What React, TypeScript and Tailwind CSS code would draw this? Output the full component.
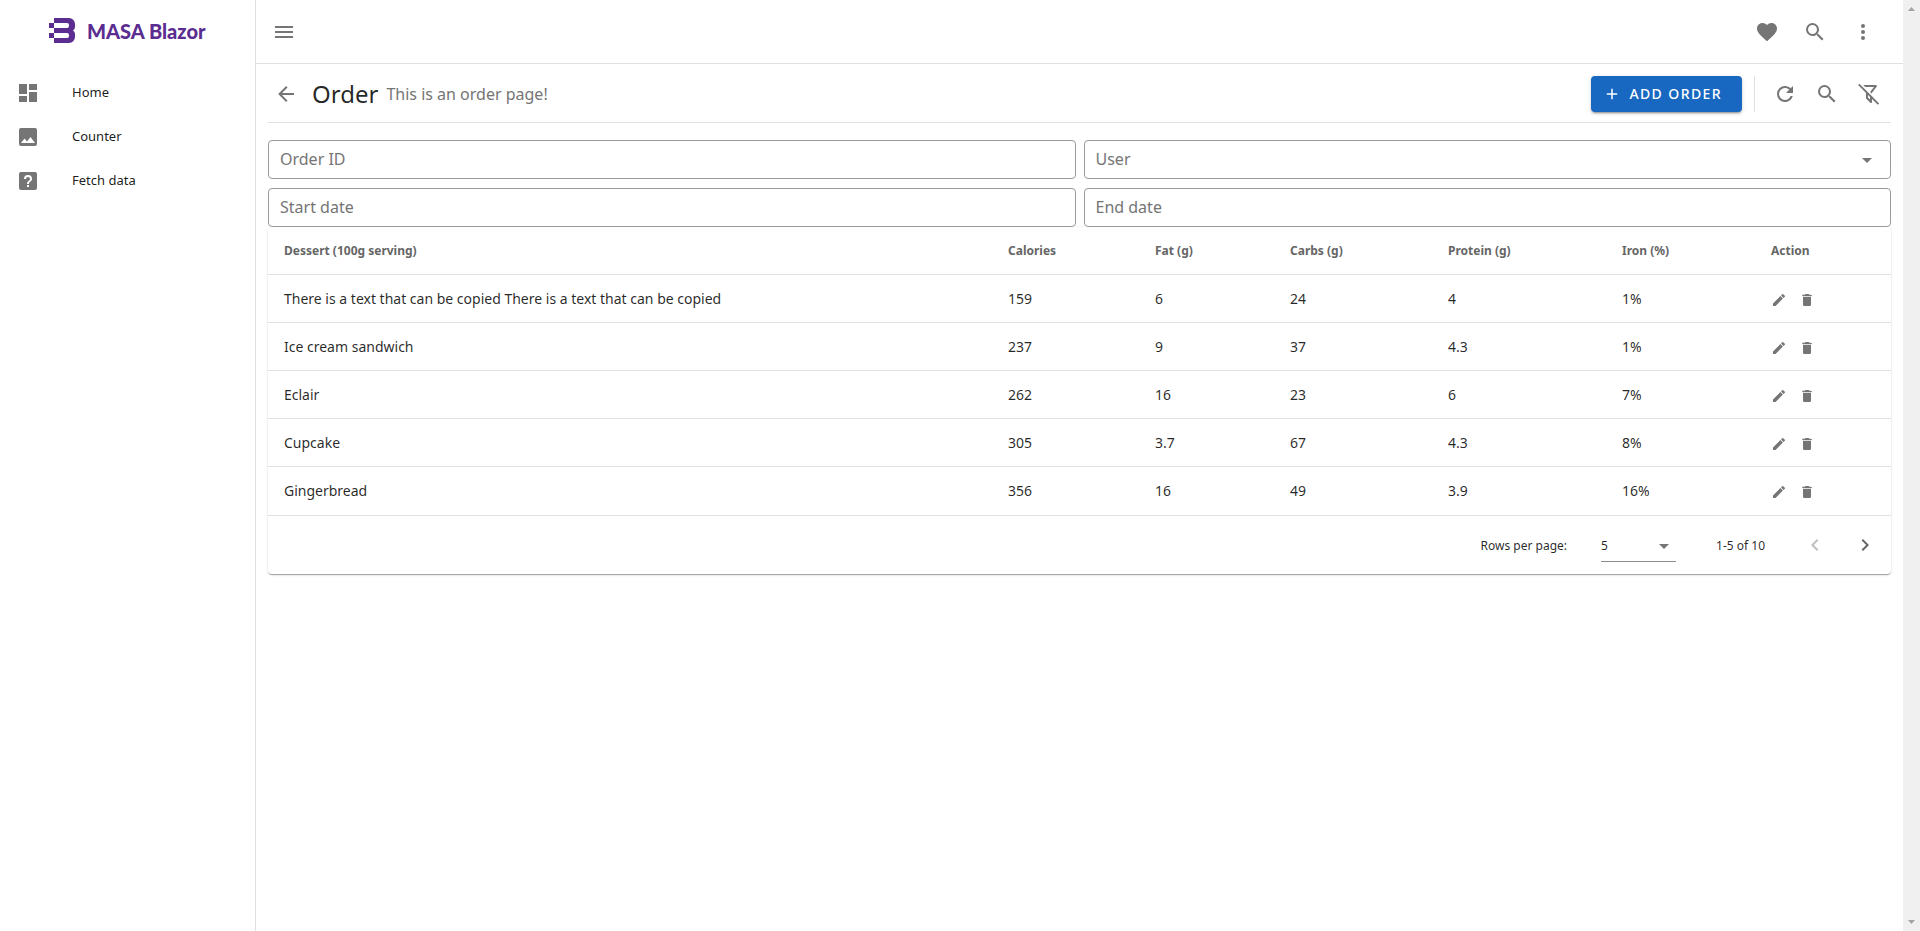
import type { ReactNode } from "react";

const icons = {
  dashboard: "M13,3V9H21V3M13,21H21V11H13M3,21H11V15H3M3,13H11V3H3V13Z",
  image:
    "M8.5,13.5L11,16.5L14.5,12L19,18H5M21,19V5C21,3.89 20.1,3 19,3H5A2,2 0 0,0 3,5V19A2,2 0 0,0 5,21H19A2,2 0 0,0 21,19Z",
  help: "M11,18H13V16H11V18M12,6A4,4 0 0,0 8,10H10A2,2 0 0,1 12,8A2,2 0 0,1 14,10C14,12 11,11.75 11,15H13C13,12.75 16,12.5 16,10A4,4 0 0,0 12,6M5,3H19A2,2 0 0,1 21,5V19A2,2 0 0,1 19,21H5A2,2 0 0,1 3,19V5A2,2 0 0,1 5,3Z",
  menu: "M3,6H21V8H3V6M3,11H21V13H3V11M3,16H21V18H3V16Z",
  heart:
    "M12,21.35L10.55,20.03C5.4,15.36 2,12.27 2,8.5C2,5.41 4.42,3 7.5,3C9.24,3 10.91,3.81 12,5.08C13.09,3.81 14.76,3 16.5,3C19.58,3 22,5.41 22,8.5C22,12.27 18.6,15.36 13.45,20.03L12,21.35Z",
  search:
    "M9.5,3A6.5,6.5 0 0,1 16,9.5C16,11.11 15.41,12.59 14.44,13.73L14.71,14H15.5L20.5,19L19,20.5L14,15.5V14.71L13.73,14.44C12.59,15.41 11.11,16 9.5,16A6.5,6.5 0 0,1 3,9.5A6.5,6.5 0 0,1 9.5,3M9.5,5C7,5 5,7 5,9.5C5,12 7,14 9.5,14C12,14 14,12 14,9.5C14,7 12,5 9.5,5Z",
  dots: "M12,16A2,2 0 0,1 14,18A2,2 0 0,1 12,20A2,2 0 0,1 10,18A2,2 0 0,1 12,16M12,10A2,2 0 0,1 14,12A2,2 0 0,1 12,14A2,2 0 0,1 10,12A2,2 0 0,1 12,10M12,4A2,2 0 0,1 14,6A2,2 0 0,1 12,8A2,2 0 0,1 10,6A2,2 0 0,1 12,4Z",
  back: "M20,11V13H8L13.5,18.5L12.08,19.92L4.16,12L12.08,4.08L13.5,5.5L8,11H20Z",
  plus: "M19,13H13V19H11V13H5V11H11V5H13V11H19V13Z",
  refresh:
    "M17.65,6.35C16.2,4.9 14.21,4 12,4A8,8 0 0,0 4,12A8,8 0 0,0 12,20C15.73,20 18.84,17.45 19.73,14H17.65C16.83,16.33 14.61,18 12,18A6,6 0 0,1 6,12A6,6 0 0,1 12,6C13.66,6 15.14,6.69 16.22,7.78L13,11H20V4L17.65,6.35Z",
  filterOff:
    "M2.39 1.73L1.11 3L9 10.89V15.88C8.96 16.18 9.06 16.5 9.29 16.71L13.3 20.72C13.69 21.11 14.32 21.11 14.71 20.72C14.94 20.5 15.04 20.18 15 19.88V16.89L20.84 22.73L22.11 21.46L15 14.35L13 12.35L11 10.34L4.15 3.5L2.39 1.73M6.21 3L8.2 5H16.96L13.11 9.91L15 11.8V10.75L19.79 4.62C20.13 4.19 20.05 3.56 19.62 3.22C19.43 3.08 19.22 3 19 3H6.21M11 12.89L13 14.89V17.58L11 15.58V12.89Z",
  caret: "M7,10L12,15L17,10H7Z",
  pencil:
    "M20.71,7.04C21.1,6.65 21.1,6 20.71,5.63L18.37,3.29C18,2.9 17.35,2.9 16.96,3.29L15.12,5.12L18.87,8.87M3,17.25V21H6.75L17.81,9.93L14.06,6.18L3,17.25Z",
  trash:
    "M19,4H15.5L14.5,3H9.5L8.5,4H5V6H19M6,19A2,2 0 0,0 8,21H16A2,2 0 0,0 18,19V7H6V19Z",
  left: "M15.41,16.58L10.83,12L15.41,7.41L14,6L8,12L14,18L15.41,16.58Z",
  right: "M8.59,16.58L13.17,12L8.59,7.41L10,6L16,12L10,18L8.59,16.58Z",
};

type IconName = keyof typeof icons;

const Icon = ({ name, className = "size-6" }: { name: IconName; className?: string }) => (
  <svg viewBox="0 0 24 24" fill="currentColor" className={`shrink-0 ${className}`} aria-hidden="true">
    <path d={icons[name]} />
  </svg>
);

const IconButton = ({
  name,
  label,
  size = "size-12",
}: {
  name: IconName;
  label: string;
  size?: string;
}) => (
  <button
    type="button"
    aria-label={label}
    className={`flex items-center justify-center rounded-full text-[#757575] hover:bg-black/5 ${size}`}
  >
    <Icon name={name} />
  </button>
);

const navItems: { icon: IconName; label: string }[] = [
  { icon: "dashboard", label: "Home" },
  { icon: "image", label: "Counter" },
  { icon: "help", label: "Fetch data" },
];

const headers = [
  "Dessert (100g serving)",
  "Calories",
  "Fat (g)",
  "Carbs (g)",
  "Protein (g)",
  "Iron (%)",
  "Action",
];

const rows = [
  ["There is a text that can be copied There is a text that can be copied", "159", "6", "24", "4", "1%"],
  ["Ice cream sandwich", "237", "9", "37", "4.3", "1%"],
  ["Eclair", "262", "16", "23", "6", "7%"],
  ["Cupcake", "305", "3.7", "67", "4.3", "8%"],
  ["Gingerbread", "356", "16", "49", "3.9", "16%"],
];

const fieldClass =
  "block h-[39px] w-full rounded border border-[#9a9a9a] bg-white px-[11px] pb-0.5 text-base text-[#666] placeholder:text-[#757575] outline-none focus:border-[#1867c0]";

const SelectWrap = ({ children, caret }: { children: ReactNode; caret: string }) => (
  <div className="relative">
    {children}
    <Icon name="caret" className={`pointer-events-none absolute size-6 text-[#757575] ${caret}`} />
  </div>
);

const Sidebar = () => (
  <aside className="w-64 shrink-0 border-r border-[#e0e0e0]">
    <a href="#" className="flex h-[61px] items-center gap-3 pl-[49px] text-[#5b2d90]">
      <svg viewBox="0 0 26 25" className="h-[25px] w-[26px]" fill="currentColor" aria-hidden="true">
        <path d="M0 5h5v5H0zM0 15h5v5H0z" />
        <path d="M5 0h15a6 6 0 0 1 6 6v3a4 4 0 0 1-2 3.5 4 4 0 0 1 2 3.5v3a6 6 0 0 1-6 6H5v-5h13a2 2 0 0 0 2-2v-1a2 2 0 0 0-2-2H5v-5h13a2 2 0 0 0 2-2V7a2 2 0 0 0-2-2H5z" />
      </svg>
      <span className="font-[Lato,sans-serif] text-xl leading-none font-black whitespace-nowrap">
        MASA Blazor
      </span>
    </a>
    <nav className="mt-[10px]">
      {navItems.map((item) => (
        <a
          key={item.label}
          href="#"
          className="flex h-11 items-center gap-8 px-4 text-[13px] text-black/90 hover:bg-black/5"
        >
          <Icon name={item.icon} className="size-6 text-[#757575]" />
          <span>{item.label}</span>
        </a>
      ))}
    </nav>
  </aside>
);

const TopBar = () => (
  <header className="flex h-16 items-center justify-between border-b border-[#e0e0e0] pr-4 pl-1">
    <IconButton name="menu" label="Toggle menu" />
    <div className="flex">
      <IconButton name="heart" label="Favorites" />
      <IconButton name="search" label="Search" />
      <IconButton name="dots" label="More" />
    </div>
  </header>
);

const PageTitle = () => (
  <div className="flex h-[59px] items-center justify-between border-b border-[#e0e0e0] pt-0.5">
    <div className="flex items-center">
      <IconButton name="back" label="Back" size="size-9" />
      <h1 className="ml-2 text-2xl text-black/85">Order</h1>
      <span className="ml-2 text-base text-[#757575]">This is an order page!</span>
    </div>
    <div className="flex items-center pr-1">
      <button
        type="button"
        className="flex h-9 items-center gap-2 rounded bg-[#1867c0] pr-5 pl-3 text-sm font-medium tracking-widest text-white uppercase shadow-[0_3px_1px_-2px_rgba(0,0,0,.2),0_2px_2px_0_rgba(0,0,0,.14),0_1px_5px_0_rgba(0,0,0,.12)]"
      >
        <Icon name="plus" className="size-[18px]" />
        Add order
      </button>
      <div className="mx-3 h-9 w-px bg-[#e0e0e0]" />
      <IconButton name="refresh" label="Refresh" size="size-9" />
      <IconButton name="search" label="Search orders" />
      <IconButton name="filterOff" label="Clear filters" size="size-9" />
    </div>
  </div>
);

const Filters = () => (
  <form className="mt-[17px] grid grid-cols-2 gap-x-2 gap-y-[9px]">
    <input aria-label="Order ID" placeholder="Order ID" className={fieldClass} />
    <SelectWrap caret="top-2 right-3">
      <select aria-label="User" defaultValue="" className={`${fieldClass} appearance-none text-[#757575]`}>
        <option value="">User</option>
      </select>
    </SelectWrap>
    <input aria-label="Start date" placeholder="Start date" className={fieldClass} />
    <input aria-label="End date" placeholder="End date" className={fieldClass} />
  </form>
);

const OrderTable = () => (
  <section className="rounded shadow-[0_2px_1px_-1px_rgba(0,0,0,.2),0_1px_1px_0_rgba(0,0,0,.14),0_1px_3px_0_rgba(0,0,0,.12)]">
    <table className="w-full table-fixed border-separate border-spacing-0 text-left">
      <colgroup>
        <col />
        <col className="w-[147px]" />
        <col className="w-[135px]" />
        <col className="w-[158px]" />
        <col className="w-[174px]" />
        <col className="w-[149px]" />
        <col className="w-[136px]" />
      </colgroup>
      <thead>
        <tr>
          {headers.map((h) => (
            <th key={h} className="h-12 border-b border-[#e0e0e0] px-4 text-xs font-bold text-[#666]">
              {h}
            </th>
          ))}
        </tr>
      </thead>
      <tbody>
        {rows.map((row) => (
          <tr key={row[0]} className="group/row hover:bg-[#eee]">
            {row.map((cell, i) => (
              <td
                key={i}
                className="h-12 truncate border-b border-[#e0e0e0] px-4 text-sm text-black/85 group-last/row:border-b-0"
              >
                {cell}
              </td>
            ))}
            <td className="h-12 border-b border-[#e0e0e0] px-4 text-[#757575] group-last/row:border-b-0">
              <div className="flex gap-3 pt-0.5">
                <button type="button" aria-label={`Edit ${row[0]}`}>
                  <Icon name="pencil" className="size-4" />
                </button>
                <button type="button" aria-label={`Delete ${row[0]}`}>
                  <Icon name="trash" className="size-4" />
                </button>
              </div>
            </td>
          </tr>
        ))}
      </tbody>
    </table>
    <div className="flex h-[59px] items-center justify-end border-t border-[#e0e0e0] pr-2 text-xs text-black/85">
      <div className="mr-8 flex items-center pt-0.5">
        <label htmlFor="rows-per-page">Rows per page:</label>
        <div className="mr-10 ml-[34px]">
          <SelectWrap caret="top-1 right-0">
            <select
              id="rows-per-page"
              defaultValue="5"
              className="h-8 w-[75px] appearance-none border-b border-[#8c8c8c] bg-transparent"
            >
              <option>5</option>
              <option>10</option>
              <option>15</option>
            </select>
          </SelectWrap>
        </div>
        <span>1-5 of 10</span>
      </div>
      <button
        type="button"
        aria-label="Previous page"
        disabled
        className="mr-[14px] flex size-9 items-center justify-center text-black/25"
      >
        <Icon name="left" />
      </button>
      <button
        type="button"
        aria-label="Next page"
        className="flex size-9 items-center justify-center text-[#666]"
      >
        <Icon name="right" />
      </button>
    </div>
  </section>
);

const ScrollRail = () => (
  <div className="flex w-[17px] shrink-0 flex-col items-center justify-between bg-[#f0f0f0] py-[7px] text-[#a3a3a3]">
    <svg viewBox="0 0 7 4" className="h-1 w-[7px]" fill="currentColor" aria-hidden="true">
      <path d="M0 4 3.5 0 7 4z" />
    </svg>
    <svg viewBox="0 0 7 4" className="h-1 w-[7px]" fill="currentColor" aria-hidden="true">
      <path d="M0 0h7L3.5 4z" />
    </svg>
  </div>
);

const App = () => (
  <div className="flex min-h-screen bg-white font-['Noto_Sans','Open_Sans',sans-serif]">
    <Sidebar />
    <div className="min-w-0 flex-1">
      <TopBar />
      <main className="px-3">
        <PageTitle />
        <Filters />
        <OrderTable />
      </main>
    </div>
    <ScrollRail />
  </div>
);

export default App;
